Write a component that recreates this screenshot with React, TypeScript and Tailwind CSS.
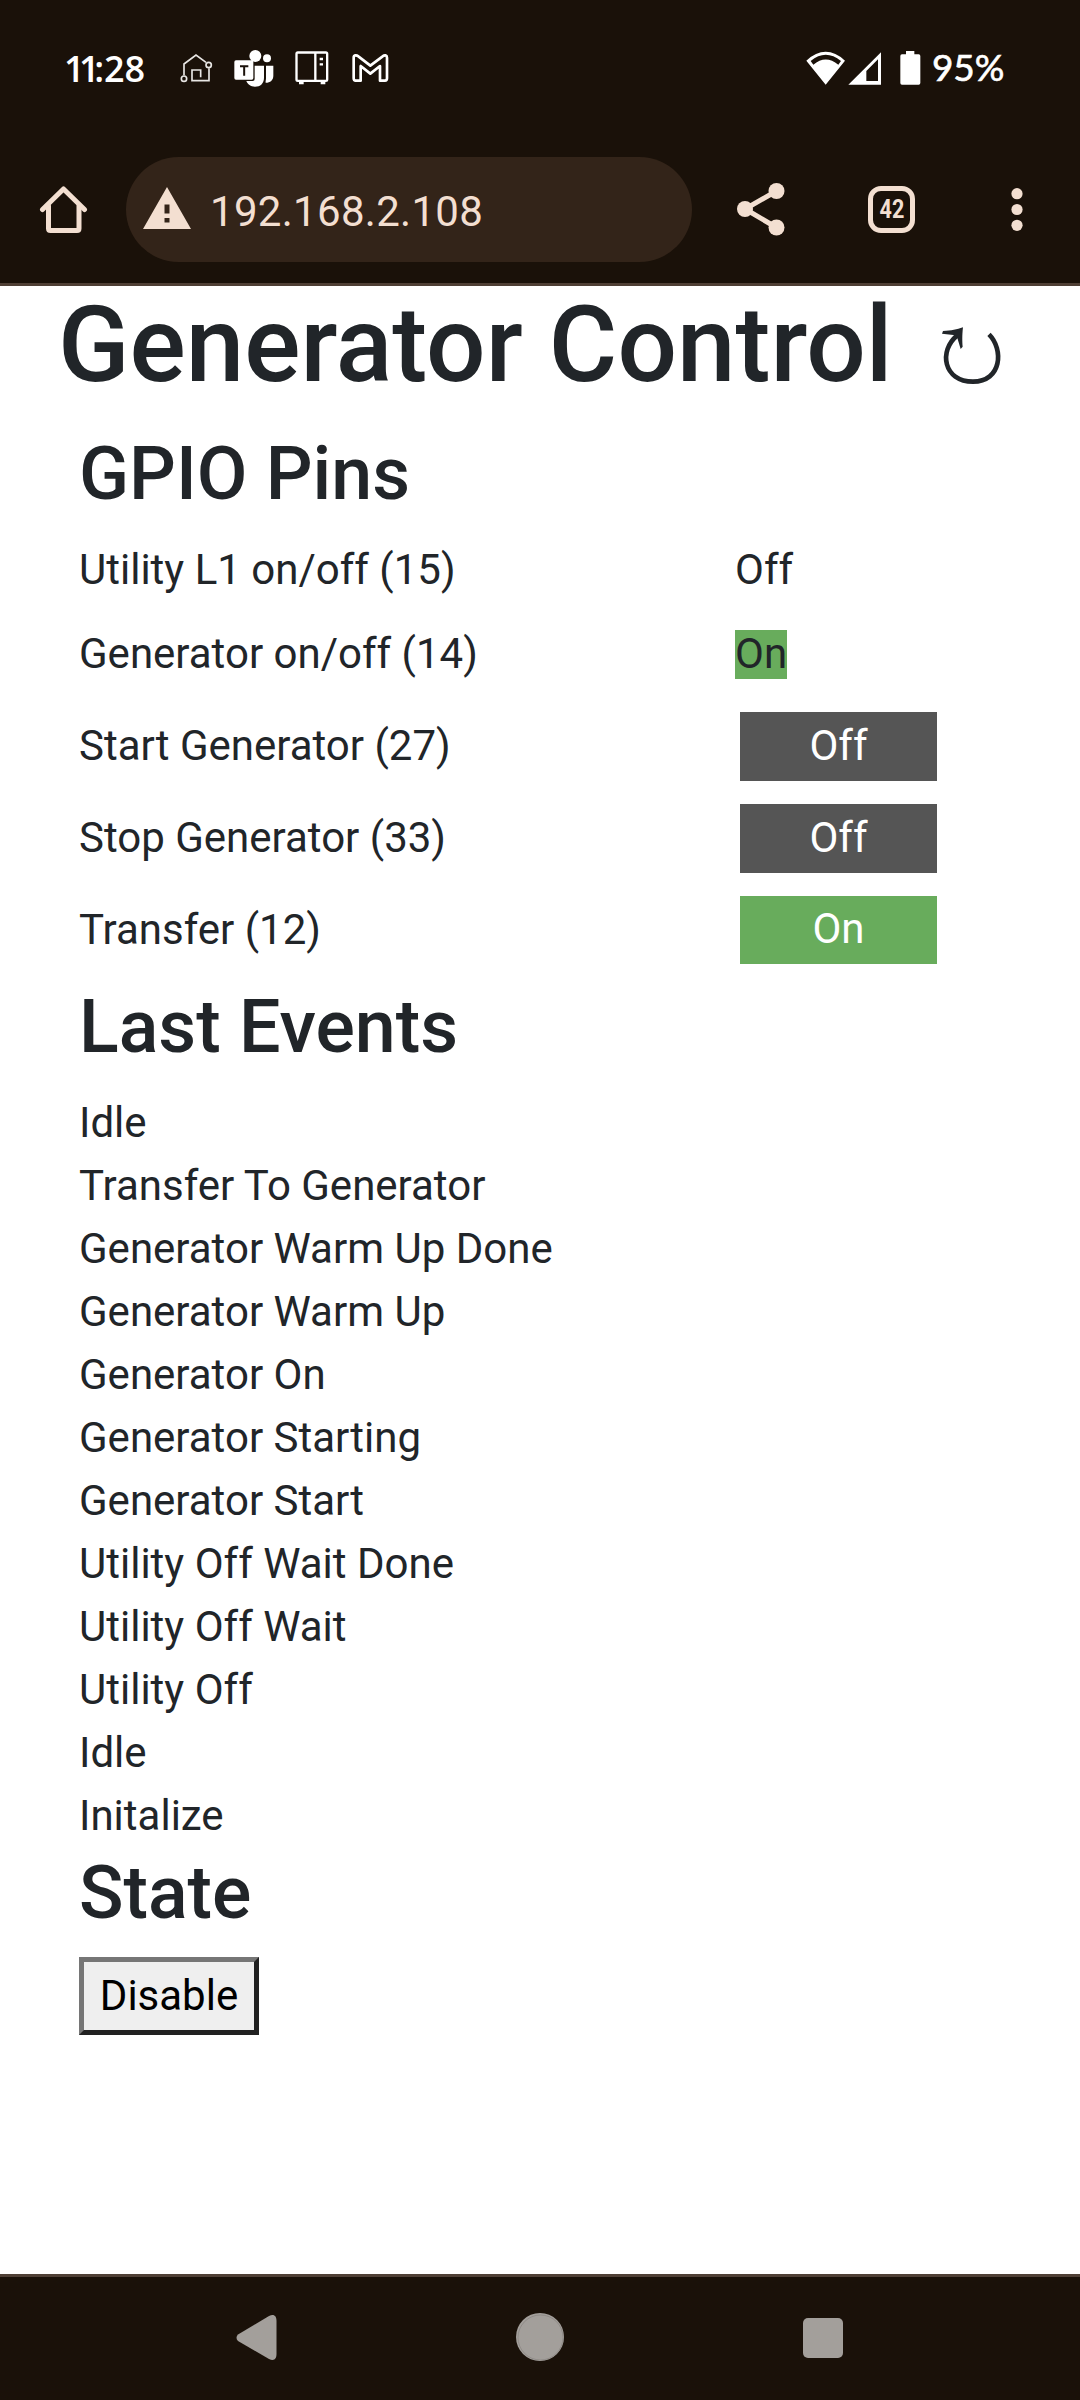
import type { ReactNode } from "react";

const EVENTS = [
  "Idle",
  "Transfer To Generator",
  "Generator Warm Up Done",
  "Generator Warm Up",
  "Generator On",
  "Generator Starting",
  "Generator Start",
  "Utility Off Wait Done",
  "Utility Off Wait",
  "Utility Off",
  "Idle",
  "Initalize",
];

function SmartHomeIcon() {
  return (
    <svg className="ml-[35px] h-[30px] w-[33px]" viewBox="419 71 99 90" fill="none" stroke="#e8e6e4" strokeWidth="5">
      <path d="M431 138V104L467 77L497 99" />
      <path d="M506 117V154H455V122H481V144" />
      <circle cx="431" cy="148" r="8" />
      <circle cx="505" cy="107" r="8" />
    </svg>
  );
}

function TeamsIcon() {
  return (
    <svg className="ml-[21px] h-[39px] w-[40px]" viewBox="581 58 120 117" fill="#fff">
      <circle cx="645" cy="79" r="18" />
      <circle cx="680" cy="86" r="12" />
      <path d="M677 108H699V138C699 151 690 159 676 159C675 158 677 150 677 146Z" />
      <path d="M643 108H671V144C671 161 660 171 644 171C631 171 622 164 618 154H637Q643 154 643 148Z" />
      <rect x="582" y="92" width="57" height="58" rx="5" />
      <path d="M599 107H624V113H614.500V138H608.500V113H599Z" fill="#1a110a" />
    </svg>
  );
}

function ApplianceIcon() {
  return (
    <svg className="ml-[21px] h-[34px] w-[34px]" viewBox="765 66 102 102" fill="none" stroke="#fff" strokeWidth="7">
      <rect x="769.500" y="70.500" width="92" height="85" rx="4" />
      <path d="M826 70V155M839 90H849M839 106H849" />
      <path d="M777 160H791M842 160H856" strokeWidth="11" />
    </svg>
  );
}

function MailIcon() {
  return (
    <svg className="ml-[23px] h-[30px] w-[37px]" viewBox="935 70 111 90" fill="none" stroke="#fff" strokeWidth="8" strokeLinejoin="round">
      <path d="M940 84C940 76 948 75 954 80L990 108L1027 80C1033 75 1040 76 1040 84V146Q1040 153 1034 153H1019V109L990 132L961 109V153H946Q940 153 940 146Z" />
    </svg>
  );
}

function StatusBar() {
  return (
    <div className="flex h-[136px] items-center text-white">
      <span className="mt-px ml-[64px] w-[81px] whitespace-nowrap font-['Open_Sans'] text-[36px] leading-[48px] font-semibold">
        <span className="tracking-[-5.5px]">11</span>:28
      </span>
      <SmartHomeIcon />
      <TeamsIcon />
      <ApplianceIcon />
      <MailIcon />
      <svg className="ml-auto h-[34px] w-[40px]" viewBox="80 61 120 102" fill="#fff">
        <path fillRule="evenodd" d="M81 90Q139 37 197 90L139 162ZM94 91L102 102Q139 71 177 102L185 91Q139 54 94 91Z" />
      </svg>
      <svg className="ml-[2px] h-[33px] w-[34px]" viewBox="206 64 102 99" fill="#fff">
        <path fillRule="evenodd" d="M207 162L305 65V162ZM261 121V151H296V86Z" />
      </svg>
      <svg className="ml-[18px] h-[34px] w-[21px]" viewBox="362 60 63 102" fill="#fff">
        <path d="M380 60H405V70H418Q423 70 423 75V156Q423 161 418 161H368Q363 161 363 156V75Q363 70 368 70H380Z" />
      </svg>
      <span className="-mt-[2px] mr-[72px] ml-[11px] w-[76px] whitespace-nowrap font-[Lato] text-[37px] leading-[48px] tracking-[-0.1px] [-webkit-text-stroke:0.6px_white]">
        95%
      </span>
    </div>
  );
}

function BrowserBar() {
  return (
    <div className="flex h-[147px] items-start text-[#f3dfd1]">
      <svg className="mt-[49px] ml-[39px] h-[49px] w-[50px]" viewBox="0 0 50 49" fill="none" stroke="currentColor" strokeWidth="5" strokeLinejoin="round" strokeLinecap="round">
        <path d="M3.500 24.500L24.500 4L45.500 24.500" />
        <path d="M9.500 21V43.500Q9.500 45.500 11.500 45.500H38Q40 45.500 40 43.500V21" />
      </svg>
      <div className="mt-[21px] ml-[37px] flex h-[105px] w-[566px] items-center rounded-full bg-[#332419]">
        <svg className="-mt-[3px] ml-[17px] h-[42px] w-[48px]" viewBox="0 0 48 42" fill="currentColor">
          <path fillRule="evenodd" d="M24 0L48 42H0ZM21.500 17.500V26.500H26.500V17.500ZM21.500 31V35.500H26.500V31Z" />
        </svg>
        <span className="mt-[5px] ml-[19px] text-[42px] leading-[50px] tracking-[0.3px]">192.168.2.108</span>
      </div>
      <svg className="mt-[46px] ml-[45px] h-[54px] w-[48px]" viewBox="0 0 48 54" fill="currentColor">
        <path d="M39.500 9L8 27L39.500 45.500" fill="none" stroke="currentColor" strokeWidth="5" />
        <circle cx="39.500" cy="9" r="8" />
        <circle cx="8" cy="27" r="8" />
        <circle cx="39.500" cy="45.500" r="8" />
      </svg>
      <div className="mt-[50px] ml-[83px] flex size-[47px] items-center justify-center rounded-[13px] border-5 border-current">
        <span className="mb-px origin-center scale-x-[0.83] text-[26px] leading-none font-bold">42</span>
      </div>
      <svg className="mt-[50px] ml-[96px] h-[46px] w-[12px]" viewBox="0 0 12 46" fill="currentColor">
        <circle cx="6" cy="7.700" r="5.600" />
        <circle cx="6" cy="23.500" r="5.600" />
        <circle cx="6" cy="39.300" r="5.600" />
      </svg>
    </div>
  );
}

function PinRow({ label, children }: { label: string; children: ReactNode }) {
  return (
    <div className="flex h-[84px] items-center">
      <span className="w-[656px] pb-[2px]">{label}</span>
      {children}
    </div>
  );
}

function SwitchRow({ label, on = false }: { label: string; on?: boolean }) {
  return (
    <div className="flex h-[92px] items-start pt-[12px]">
      <span className="w-[661px] leading-[67px]">{label}</span>
      <button
        className={
          on
            ? "h-[68px] w-[197px] bg-[#68ac5c] pb-[2px] leading-[66px] text-white"
            : "h-[69px] w-[197px] bg-[#555555] pb-[2px] leading-[67px] text-white"
        }
      >
        {on ? "On" : "Off"}
      </button>
    </div>
  );
}

function Heading({ children }: { children: ReactNode }) {
  return <h2 className="h-[90px] text-[73.5px] leading-[92px] font-medium">{children}</h2>;
}

export default function App() {
  return (
    <div className="flex h-[2400px] w-[1080px] flex-col overflow-hidden bg-white font-[Roboto,sans-serif] text-[42px] leading-[63px] text-[#212529]">
      <header className="h-[286px] border-b-3 border-[#4f3f35] bg-[#1a1109]">
        <StatusBar />
        <BrowserBar />
      </header>

      <main className="flex-1">
        <div className="flex h-[142px] items-start pl-[58px]">
          <h1 className="w-[883px] whitespace-nowrap text-[105px] leading-[120px] font-medium">Generator Control</h1>
          <svg className="mt-[40px] h-[60px] w-[62px]" viewBox="1143 138 186 180" fill="none">
            <path d="M1287 163C1332 208 1325 305 1239 305C1150 305 1135 212 1192 166" stroke="currentColor" strokeWidth="14" />
            <path d="M1209 142C1206 168 1207 185 1208 200L1202 207L1192 174L1180 165L1146 161L1149 153C1175 152 1190 149 1209 142Z" fill="currentColor" />
          </svg>
        </div>

        <div className="pl-[79px]">
          <Heading>GPIO Pins</Heading>
          <div className="mt-[10px]">
            <PinRow label="Utility L1 on/off (15)">
              <span className="pb-[2px]">Off</span>
            </PinRow>
            <PinRow label="Generator on/off (14)">
              <span className="h-[49px] bg-[#68ac5c] leading-[48px]">On</span>
            </PinRow>
          </div>
          <div className="mt-[4px] mb-[5px]">
            <SwitchRow label="Start Generator (27)" />
            <SwitchRow label="Stop Generator (33)" />
            <SwitchRow label="Transfer (12)" on />
          </div>

          <Heading>Last Events</Heading>
          <ul className="mt-[20px]">
            {EVENTS.map((event, i) => (
              <li key={i}>{event}</li>
            ))}
          </ul>

          <Heading>State</Heading>
          <button className="mt-[20px] flex h-[78px] w-[180px] items-center justify-center border-5 border-t-[#767676] border-r-[#212121] border-b-[#212121] border-l-[#767676] bg-[#efefef] pb-px text-black">
            Disable
          </button>
        </div>
      </main>

      <footer className="flex h-[126px] items-start border-t-3 border-[#4f3f35] bg-[#1a1109]">
        <svg className="mt-[37px] ml-[236px] h-[48px] w-[41px]" viewBox="0 0 41 48" fill="#a39f9b">
          <path d="M2 20.500L33 2C38 -0.500 40.500 2 40.500 7V40C40.500 45 38 47.500 33 45L2 27Q-1 23.500 2 20.500Z" />
        </svg>
        <svg className="mt-[36px] ml-[239px] size-[48px]" viewBox="0 0 48 48" fill="#a39f9b">
          <circle cx="24" cy="24" r="24" />
          <circle cx="24.500" cy="24.500" r="22.500" fill="none" stroke="#8b8783" strokeWidth="0.800" />
        </svg>
        <div className="mt-[41px] ml-[239px] h-[40px] w-[40px] rounded-[5px] bg-[#a39f9b]" />
      </footer>
    </div>
  );
}
